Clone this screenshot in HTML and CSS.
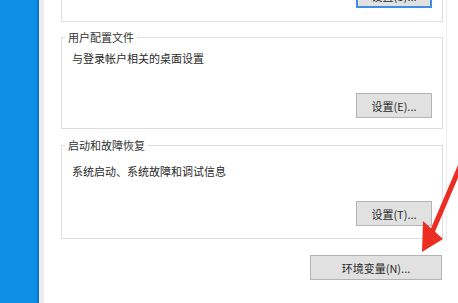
FILE: index.html
```html
<!DOCTYPE html>
<html lang="zh-CN">
<head>
<meta charset="utf-8">
<link rel="stylesheet" href="styles.css">
</head>
<body>
<div class="stage">
  <div class="taskbar"></div>
  <div class="shade"></div>
  <div class="dialog">
    <div class="column">
      <div class="group group-top">
        <button class="btn btn-default">设置(S)...</button>
      </div>
      <div class="group group-profile">
        <span class="legend">用户配置文件</span>
        <p class="desc">与登录帐户相关的桌面设置</p>
        <button class="btn">设置(E)...</button>
      </div>
      <div class="group group-startup">
        <span class="legend">启动和故障恢复</span>
        <p class="desc">系统启动、系统故障和调试信息</p>
        <button class="btn">设置(T)...</button>
      </div>
      <button class="btn btn-env">环境变量(N)...</button>
    </div>
    <div class="edge"></div>
  </div>
  <svg class="arrow" width="458" height="303" viewBox="0 0 458 303">
    <line x1="462" y1="162" x2="433" y2="230" stroke="#ec2d24" stroke-width="5" stroke-linecap="round"/>
    <polygon points="422,252 423,221 443,239" fill="#ec2d24"/>
  </svg>
</div>
</body>
</html>
```

FILE: styles.css
```css
html, body {
  margin: 0;
  padding: 0;
  background: #ffffff;
}
.stage {
  position: relative;
  display: flex;
  width: 458px;
  height: 303px;
  overflow: hidden;
  font-family: "Noto Sans CJK SC", "Microsoft YaHei", sans-serif;
  font-size: 11px;
  color: #2a2a2a;
}
.taskbar {
  width: 37px;
  flex: none;
  background: #0c8fe4;
  border-right: 2px solid #0a74c9;
}
.shade {
  width: 5px;
  flex: none;
  background: #ececec;
}
.dialog {
  flex: 1;
  display: flex;
  background: #ffffff;
  padding-left: 17px;
}
.column {
  width: 382px;
  display: flex;
  flex-direction: column;
  align-items: stretch;
}
.group {
  position: relative;
  box-sizing: border-box;
  border: 1px solid #dedede;
  display: flex;
  flex-direction: column;
  padding: 0 10px 11px 10px;
}
.group-top {
  height: 60px;
  margin-top: -38px;
  padding-bottom: 13px;
  justify-content: flex-end;
}
.group-profile {
  height: 92px;
  margin-top: 15px;
  padding-top: 12px;
  padding-bottom: 10px;
}
.group-startup {
  height: 94px;
  margin-top: 16px;
  padding-top: 17px;
  padding-bottom: 12px;
}
.legend {
  position: absolute;
  top: -9px;
  left: 3px;
  padding: 0 3px;
  background: #ffffff;
  line-height: 16px;
  color: #333333;
}
.desc {
  margin: 0;
  line-height: 16px;
  color: #2a2a2a;
}
.btn {
  box-sizing: border-box;
  align-self: flex-end;
  margin-top: auto;
  width: 76px;
  height: 25px;
  padding: 0;
  border: 1px solid #b4b4b4;
  background: #e1e1e1;
  font-family: inherit;
  font-size: 11px;
  color: #2a2a2a;
  line-height: 16px;
}
.btn-default {
  border: 2px solid #3f8ee0;
}
.btn-env {
  width: 132px;
  margin-top: 16px;
  margin-right: 1px;
}
.edge {
  width: 1px;
  margin-left: 3px;
  height: 241px;
  background: #eeeeee;
}
.arrow {
  position: absolute;
  left: 0;
  top: 0;
  pointer-events: none;
}
```
